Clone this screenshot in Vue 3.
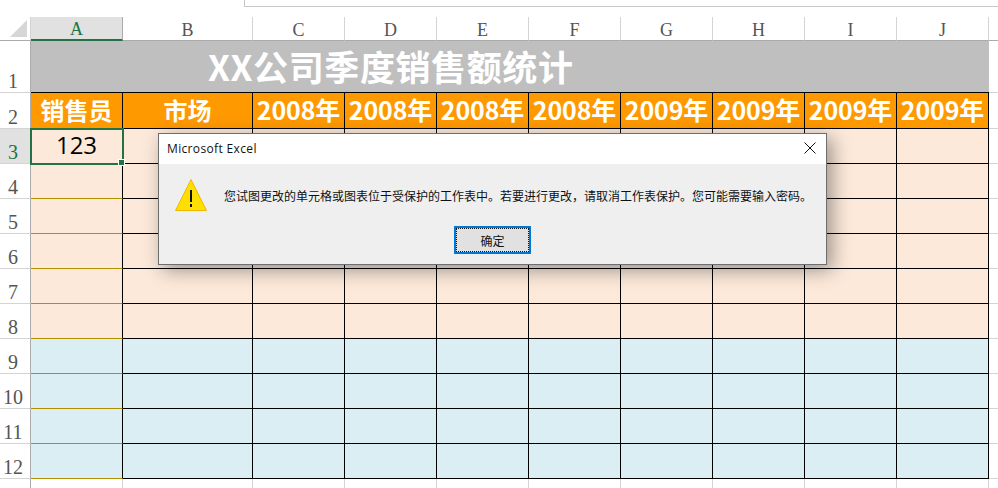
<script setup>
const columns = ['A', 'B', 'C', 'D', 'E', 'F', 'G', 'H', 'I', 'J'];
const headers = ['销售员', '市场', '2008年', '2008年', '2008年', '2008年', '2009年', '2009年', '2009年', '2009年'];

// body rows of the sheet, 3 to 13
const rows = [];
for (let n = 3; n <= 13; n++) {
  rows.push({ n, tone: n <= 8 ? 'peach' : n <= 12 ? 'blue' : 'empty' });
}
</script>

<template>
  <div class="page">
    <div class="top-strip">
      <div class="formula-box"></div>
    </div>

    <div class="sheet">
      <!-- column letters -->
      <div class="corner"><span class="corner-mark"></span></div>
      <div v-for="c in columns" :key="c" class="col-head" :class="{ active: c === 'A' }">{{ c }}</div>
      <div class="col-head rest"></div>

      <!-- title row -->
      <div class="row-head">1</div>
      <div class="title">XX公司季度销售额统计</div>
      <div class="rest-cell"></div>

      <!-- header row -->
      <div class="row-head">2</div>
      <div v-for="(h, i) in headers" :key="i" class="head-cell" :class="{ year: i > 1 }">{{ h }}</div>
      <div class="rest-cell"></div>

      <!-- data rows -->
      <template v-for="r in rows" :key="r.n">
        <div class="row-head" :class="{ active: r.n === 3 }">{{ r.n }}</div>
        <div
          v-for="(c, i) in columns"
          :key="c"
          class="cell"
          :class="[r.tone, { first: i === 0, selected: i === 0 && r.n === 3 }]"
        >
          <template v-if="i === 0 && r.n === 3">123<span class="handle"></span></template>
        </div>
        <div class="rest-cell"></div>
      </template>
    </div>

    <div class="dialog">
      <div class="dialog-title">
        <span>Microsoft Excel</span>
        <svg class="close" width="12" height="12" viewBox="0 0 12 12">
          <path d="M0.5 0.5 L11.5 11.5 M11.5 0.5 L0.5 11.5" stroke="#111" stroke-width="1" fill="none" />
        </svg>
      </div>
      <div class="dialog-body">
        <div class="message">
          <svg class="warn" width="34" height="34" viewBox="0 0 34 34">
            <path d="M17 1.5 L32.5 32.5 L1.5 32.5 Z" fill="#ffdf00" stroke="#f2b705" stroke-width="1" stroke-linejoin="round" />
            <rect x="16" y="12" width="2" height="12" fill="#111" />
            <rect x="16" y="26" width="2" height="3" fill="#111" />
          </svg>
          <span>您试图更改的单元格或图表位于受保护的工作表中。若要进行更改，请取消工作表保护。您可能需要输入密码。</span>
        </div>
        <div class="actions">
          <button class="ok"><span class="ok-inner">确定</span></button>
        </div>
      </div>
    </div>
  </div>
</template>

<style scoped>
.page {
  position: relative;
  width: 998px;
  height: 488px;
  overflow: hidden;
  background: #fff;
  font-family: "Noto Sans CJK SC", "Noto Sans", sans-serif;
}

.top-strip {
  height: 17px;
}

.formula-box {
  margin-left: 244px;
  height: 6px;
  border-left: 1px solid #c8c8c8;
  border-bottom: 1px solid #c8c8c8;
}

.sheet {
  display: grid;
  grid-template-columns: 31px 92px 130px repeat(8, 92px) 9px;
  grid-template-rows: 24px 52px 36px repeat(11, 35px);
}

.corner {
  display: flex;
  align-items: flex-end;
  justify-content: flex-end;
  padding: 0 3px 3px 0;
  box-sizing: border-box;
  border-right: 1px solid #d4d4d4;
  border-bottom: 1px solid #ababab;
}

.corner-mark {
  width: 0;
  height: 0;
  border-left: 17px solid transparent;
  border-bottom: 17px solid #d6d6d6;
}

.col-head {
  display: flex;
  align-items: center;
  justify-content: center;
  box-sizing: border-box;
  padding-top: 3px;
  font-family: "Liberation Serif", serif;
  font-size: 18px;
  color: #555;
  border-right: 1px solid #d4d4d4;
  border-bottom: 1px solid #ababab;
}

.col-head.active {
  background: #e1e1e1;
  color: #217346;
  border-right-color: #ababab;
  border-bottom: 2px solid #217346;
}

.col-head.rest {
  border-right: none;
}

.row-head {
  display: flex;
  align-items: flex-end;
  justify-content: center;
  box-sizing: border-box;
  padding-right: 4px;
  line-height: 21px;
  font-family: "Liberation Serif", serif;
  font-size: 20px;
  color: #555;
  background: #fff;
  border-right: 1px solid #ababab;
  border-bottom: 1px solid #d4d4d4;
}

.row-head.active {
  background: #e1e1e1;
  color: #217346;
}

.title {
  grid-column: span 10;
  box-sizing: border-box;
  display: flex;
  align-items: center;
  padding: 0 0 2px 177px;
  background: #bfbfbf;
  border-bottom: 1px solid #000;
  color: #fff;
  font-size: 35px;
  font-weight: 700;
  letter-spacing: 0.6px;
}

.rest-cell {
  border-bottom: 1px solid #d4d4d4;
}

.head-cell {
  display: flex;
  align-items: center;
  justify-content: center;
  box-sizing: border-box;
  padding-bottom: 3px;
  background: #ff9900;
  border-right: 1px solid #000;
  border-bottom: 1px solid #000;
  color: #fff;
  font-size: 24px;
  font-weight: 700;
  white-space: nowrap;
}

.head-cell.year {
  font-size: 25px;
  letter-spacing: -0.1px;
}

.cell {
  box-sizing: border-box;
  border-right: 1px solid #000;
  border-bottom: 1px solid #000;
}

.cell.first {
  border-bottom-color: #b09000;
}

.cell.peach {
  background: #fce9da;
}

.cell.blue {
  background: #daeef3;
}

.cell.empty {
  border-right-color: #d4d4d4;
  border-bottom-color: #d4d4d4;
}

.cell.selected {
  position: relative;
  display: flex;
  align-items: center;
  justify-content: center;
  padding-bottom: 4px;
  font-family: "Open Sans", sans-serif;
  font-size: 24px;
  color: #000;
  outline: 2px solid #217346;
  outline-offset: -1px;
  z-index: 1;
}

.handle {
  position: absolute;
  right: -3px;
  bottom: -3px;
  width: 5px;
  height: 5px;
  background: #217346;
  border: 1px solid #fff;
}

.dialog {
  position: absolute;
  left: 158px;
  top: 133px;
  z-index: 2;
  width: 669px;
  height: 132px;
  box-sizing: border-box;
  display: flex;
  flex-direction: column;
  background: #f0f0f0;
  border: 1px solid #6e6e6e;
  box-shadow: 5px 5px 18px rgba(0, 0, 0, 0.38);
}

.dialog-title {
  height: 30px;
  flex: none;
  display: flex;
  align-items: center;
  justify-content: space-between;
  padding: 0 10px 2px 8px;
  box-sizing: border-box;
  background: #fff;
  font-family: "Open Sans", sans-serif;
  font-size: 12px;
  letter-spacing: 0.35px;
  color: #111;
}

.dialog-body {
  flex: 1;
  display: flex;
  flex-direction: column;
  padding: 14px 0 0 15px;
  background: #efefef;
}

.message {
  display: flex;
  align-items: center;
  gap: 16px;
  font-size: 12px;
  color: #111;
  white-space: nowrap;
}

.warn {
  flex: none;
}

.actions {
  display: flex;
  justify-content: center;
  margin-top: 14px;
  padding-right: 15px;
}

.ok {
  width: 77px;
  height: 28px;
  padding: 0;
  box-sizing: border-box;
  background: #e1e1e1;
  border: 2px solid #0078d7;
  font-family: inherit;
  font-size: 12px;
  color: #111;
}

.ok-inner {
  display: flex;
  align-items: center;
  justify-content: center;
  height: 100%;
  box-sizing: border-box;
  border: 1px dotted #111;
}
</style>
